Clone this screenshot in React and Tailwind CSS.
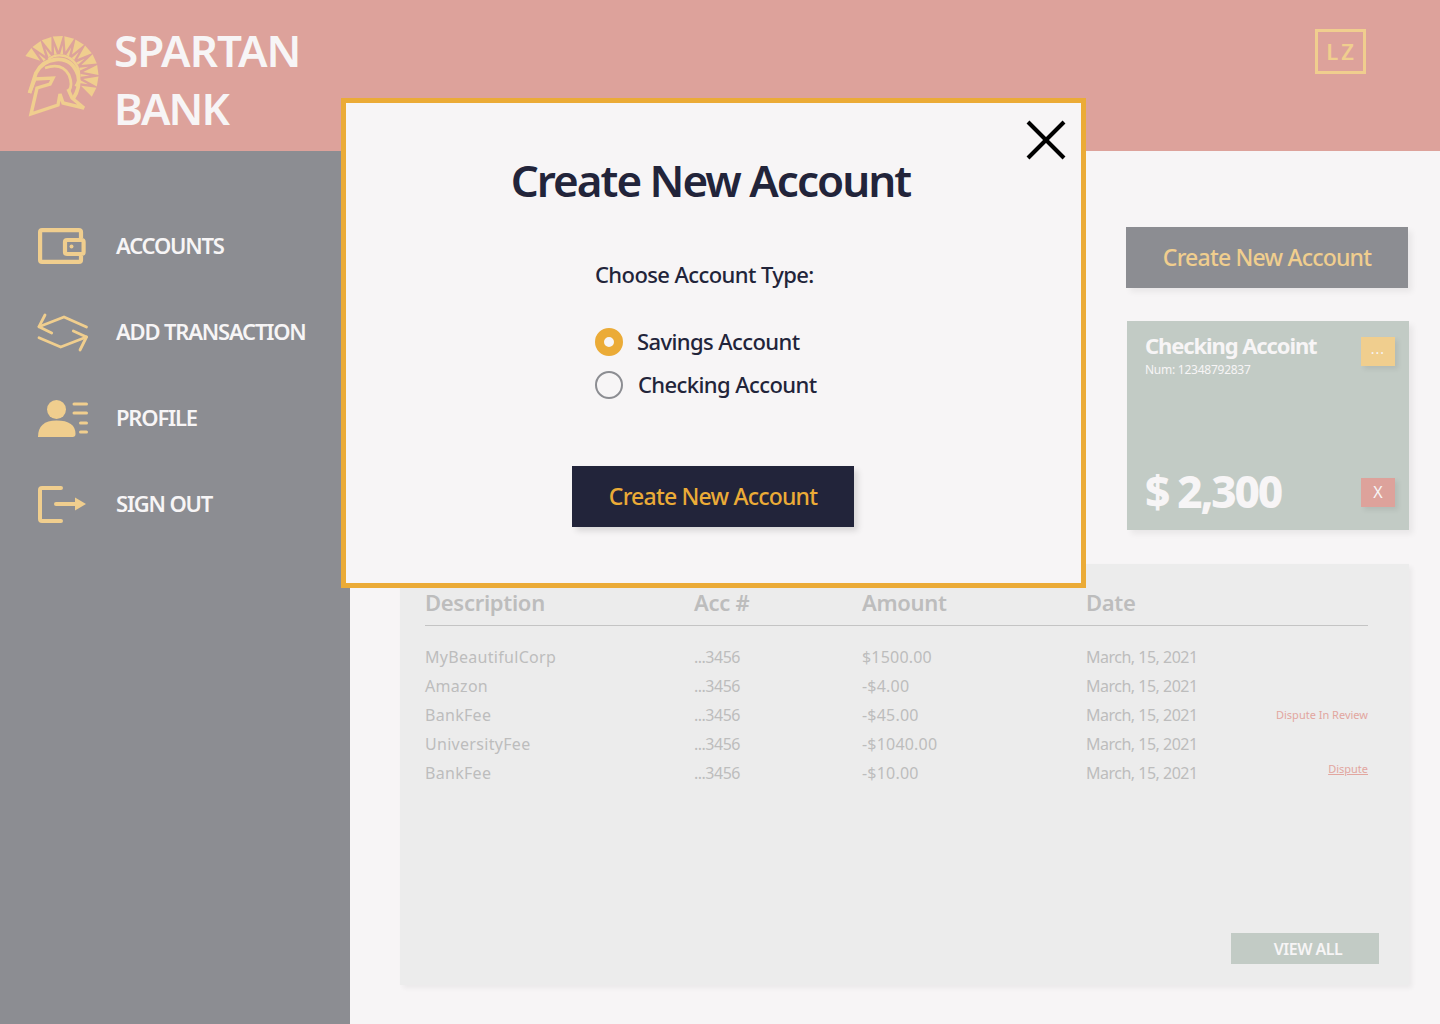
const rows = [
  { name: "MyBeautifulCorp", amount: "$1500.00" },
  { name: "Amazon", amount: "-$4.00" },
  { name: "BankFee", amount: "-$45.00", status: "review" },
  { name: "UniversityFee", amount: "-$1040.00" },
  { name: "BankFee", amount: "-$10.00", status: "dispute" },
];

// crest points around the helmet, angle 0 is straight up
function polar(r, deg) {
  const a = (deg * Math.PI) / 180;
  return `${(41.5 + r * Math.sin(a)).toFixed(1)} ${(44 - r * Math.cos(a)).toFixed(1)}`;
}

const crestAngles = Array.from({ length: 11 }, (_, i) => -62 + i * 17);

function Logo() {
  return (
    <svg width="84" height="90" viewBox="0 0 84 90" className="shrink-0">
      <g fill="#F0CE8E">
        {crestAngles.map((a) => (
          <polygon key={a} points={`${polar(39, a + 1)} ${polar(39, a + 16)} ${polar(24, a + 8.5)}`} />
        ))}
        {crestAngles.slice(0, 10).map((a) => (
          <polygon key={a} points={`${polar(21, a + 13)} ${polar(21, a + 21)} ${polar(30, a + 17)}`} />
        ))}
      </g>
      <g fill="none" stroke="#F0CE8E">
        <path d={`M${polar(19.5, -35)} A19.5 19.5 0 0 1 ${polar(19.5, 125)}`} strokeWidth="2.4" />
        <path d="M11.5 62 L18 42 Q24 30 38 28.5 Q54 27 60 44 Q63 56 55 68" strokeWidth="3.8" />
        <path d="M27 37 Q44 31 51 44 Q55 54 51 60" strokeWidth="2.8" />
        <path d="M11.5 62 L17 48 L35 47 L32 53 L19 57 L13 83 L40 74 L42 63 L45 72 L66 77 L54 67 L50 58" strokeWidth="3.4" />
      </g>
    </svg>
  );
}

function WalletIcon() {
  return (
    <svg width="50" height="37" viewBox="0 0 50 37" fill="none" stroke="#F0CE8E" strokeWidth="4.2">
      <path d="M43 10 V4 Q43 2.1 41 2.1 H4 Q2.1 2.1 2.1 4 V32 Q2.1 33.9 4 33.9 H41 Q43 33.9 43 32 V28" />
      <rect x="27" y="12" width="18.6" height="14" rx="2" />
      <circle cx="33.5" cy="18.5" r="2" fill="#F0CE8E" stroke="none" />
    </svg>
  );
}

function TransferIcon() {
  return (
    <svg width="50" height="37" viewBox="0 0 50 37" fill="none" stroke="#F0CE8E" strokeWidth="2.8" strokeLinecap="round" strokeLinejoin="round" className="overflow-visible">
      <path d="M48.5 13 L26 3 L1 12.7" />
      <path d="M7 1 L1 12.7 L13.7 19" />
      <path d="M1 23.7 L22.7 33 L48.5 23" />
      <path d="M35.3 17 L48.5 23 L42 36" />
    </svg>
  );
}

function ProfileIcon() {
  return (
    <svg width="50" height="37" viewBox="0 0 50 37">
      <circle cx="18.5" cy="9.5" r="9.5" fill="#F0CE8E" />
      <path d="M0 37 Q0 20.5 18.5 20.5 Q37.5 20.5 37.5 34 Q37.5 37 34.5 37 Z" fill="#F0CE8E" />
      <g stroke="#F0CE8E" strokeWidth="3" strokeLinecap="round">
        <path d="M36 4 H48.5" />
        <path d="M36 13 H48.5" />
        <path d="M42.5 23 H48.5" />
        <path d="M42.5 32 H48.5" />
      </g>
    </svg>
  );
}

function SignOutIcon() {
  return (
    <svg width="50" height="37" viewBox="0 0 50 37" fill="none">
      <path d="M23 2 H4 Q2 2 2 4 V33 Q2 35 4 35 H23" stroke="#F0CE8E" strokeWidth="4" strokeLinecap="round" />
      <path d="M18 18 H38" stroke="#F0CE8E" strokeWidth="4" strokeLinecap="round" />
      <path d="M37 11.5 L48 18 L37 24.5 Z" fill="#F0CE8E" />
    </svg>
  );
}

function NavItem({ icon, label }) {
  return (
    <div className="flex h-[86px] items-center pl-[38px]">
      <div className="flex w-[78px] shrink-0">{icon}</div>
      <span className="pb-[2px] text-[22px] font-semibold tracking-[-1.2px] text-[#F7F5F6]">{label}</span>
    </div>
  );
}

function Row({ row }) {
  return (
    <div className="flex h-[29px] items-center text-[16px] text-[#BDBDBD]">
      <span className="w-[269px] tracking-[0.3px]">{row.name}</span>
      <span className="w-[168px] tracking-[-0.5px]">...3456</span>
      <span className="w-[224px] tracking-[0.2px]">{row.amount}</span>
      <span className="w-[150px] tracking-[-0.5px]">March, 15, 2021</span>
      <span className="flex-1 pt-[2px] text-right text-[11px] text-[#E2A69F]">
        {row.status === "review" && "Dispute In Review"}
        {row.status === "dispute" && <span className="relative -top-[4px] underline">Dispute</span>}
      </span>
    </div>
  );
}

function Modal() {
  return (
    <div className="absolute left-[341px] top-[98px] h-[490px] w-[745px] border-[5px] border-[#EBAB37] bg-[#F7F5F6]">
      <svg width="40" height="40" viewBox="0 0 40 40" className="absolute right-[15px] top-[17px]" stroke="#000" strokeWidth="4">
        <path d="M2 2 L38 38" />
        <path d="M38 2 L2 38" />
      </svg>
      <h1 className="mt-[49px] pr-[6px] text-center text-[44px] font-semibold leading-[56px] tracking-[-2px] text-[#22243A]">Create New Account</h1>
      <div className="ml-[249px] mt-[51px] text-[22px] font-medium tracking-[-0.6px] text-[#22243A]">
        <p className="leading-[30px]">Choose Account Type:</p>
        <div className="mt-[39px] flex h-[28px] items-center gap-[14px]">
          <span className="size-[28px] rounded-full border-[9px] border-[#EBAB37] bg-[#F7F5F6]" />
          <span className="pb-[2px]">Savings Account</span>
        </div>
        <div className="mt-[15px] flex h-[28px] items-center gap-[15px]">
          <span className="size-[28px] rounded-full border-2 border-[#8C8D92]" />
          <span className="pb-[2px]">Checking Account</span>
        </div>
      </div>
      <div className="ml-[226px] mt-[67px] flex h-[61px] w-[282px] items-center justify-center bg-[#22243A] text-[23px] font-medium tracking-[-0.8px] text-[#EBAB37] shadow-[4px_4px_6px_rgba(0,0,0,0.12)]">
        Create New Account
      </div>
    </div>
  );
}

export default function App() {
  return (
    <div className="relative flex h-[1024px] w-[1440px] flex-col overflow-hidden bg-[#F7F5F6] font-['Noto_Sans',sans-serif]">
      <header className="flex h-[151px] shrink-0 bg-[#DDA29B]">
        <div className="flex items-center gap-[12px] pl-[18px]">
          <Logo />
          <div className="pt-[6px] text-[44px] font-semibold leading-[58px] tracking-[-1px] text-[#F7F5F6]">
            <div>SPARTAN</div>
            <div className="tracking-[-2px]">BANK</div>
          </div>
        </div>
        <div className="ml-auto mr-[74px] mt-[29px] flex h-[45px] w-[51px] items-center justify-center border-[3px] border-[#F0CE8E] pl-[2px] text-[22px] font-semibold tracking-[3px] text-[#F0CE8E]">
          LZ
        </div>
      </header>
      <div className="flex flex-1">
        <nav className="w-[350px] shrink-0 bg-[#8C8D92] pt-[52px]">
          <NavItem icon={<WalletIcon />} label="ACCOUNTS" />
          <NavItem icon={<TransferIcon />} label="ADD TRANSACTION" />
          <NavItem icon={<ProfileIcon />} label="PROFILE" />
          <NavItem icon={<SignOutIcon />} label="SIGN OUT" />
        </nav>
        <main className="flex flex-1 flex-col pl-[50px] pr-[31px] pt-[76px]">
          <div className="-mr-[1px] flex flex-col items-end">
            <div className="mr-[2px] flex h-[61px] w-[282px] items-center justify-center bg-[#8C8D92] text-[23px] font-medium tracking-[-0.8px] text-[#F0CE8E] shadow-[4px_4px_6px_rgba(0,0,0,0.06)]">
              Create New Account
            </div>
            <div className="relative mr-[1px] mt-[33px] h-[209px] w-[282px] bg-[#C2CBC5] px-[18px] pt-[10px] text-[#F7F5F6] shadow-[4px_4px_6px_rgba(0,0,0,0.06)]">
              <p className="text-[22px] font-bold leading-[28px] tracking-[-1.1px]">Checking Accoint</p>
              <p className="mt-[3px] text-[12px] leading-[16px] tracking-[-0.25px]">Num: 12348792837</p>
              <p className="absolute bottom-[13px] left-[18px] text-[44px] font-extrabold leading-[52px] tracking-[-2.2px]">$ 2,300</p>
              <span className="absolute right-[14px] top-[16px] flex h-[29px] w-[34px] items-center justify-center bg-[#F0CE8E] pb-[6px] text-[14px] tracking-[1px] shadow-[3px_3px_5px_rgba(0,0,0,0.08)]">...</span>
              <span className="absolute right-[14px] top-[157px] flex h-[29px] w-[34px] items-center justify-center bg-[#DDA29B] pb-[2px] text-[16px] shadow-[3px_3px_5px_rgba(0,0,0,0.08)]">X</span>
            </div>
          </div>
          <section className="relative mt-[34px] h-[421px] bg-[#ECECEC] pl-[25px] pr-[41px] shadow-[3px_3px_5px_rgba(0,0,0,0.05)]">
            <div className="flex h-[62px] items-end border-b border-[#C4C4C4] pb-[6px] text-[22px] font-semibold tracking-[-0.3px] text-[#BDBDBD]">
              <span className="w-[269px]">Description</span>
              <span className="w-[168px]">Acc #</span>
              <span className="w-[224px]">Amount</span>
              <span>Date</span>
            </div>
            <div className="mt-[16px]">
              {rows.map((row, i) => (
                <Row key={i} row={row} />
              ))}
            </div>
            <div className="absolute bottom-[21px] right-[30px] flex h-[31px] w-[148px] items-center justify-center bg-[#C2CBC5] pl-[6px] text-[16px] font-semibold tracking-[-0.5px] text-[#F7F5F6]">
              VIEW ALL
            </div>
          </section>
        </main>
      </div>
      <Modal />
    </div>
  );
}
